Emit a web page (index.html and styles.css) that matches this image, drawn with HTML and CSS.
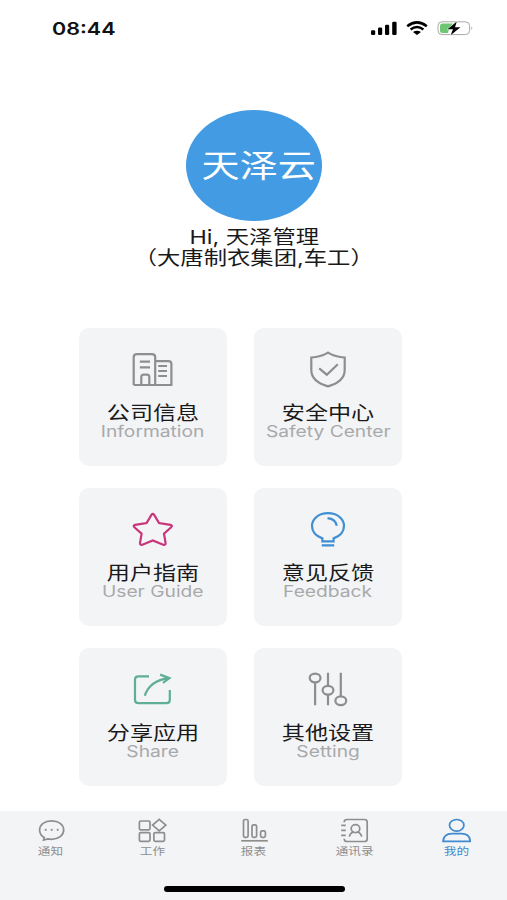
FILE: index.html
```html
<!DOCTYPE html>
<html lang="zh-CN">
<head>
    <meta charset="UTF-8">
    <meta name="viewport" content="width=device-width, initial-scale=1.0">
    <title>我的</title>
    <link rel="stylesheet" href="styles.css">
</head>
<body>
    <div class="status-bar">
        <span class="time">08:44</span>
        <svg class="status-icons" width="104" height="18" viewBox="370 19 104 18">
            <rect x="371" y="30.2" width="4.2" height="4.8" rx="1.2"/>
            <rect x="378" y="27.6" width="4.2" height="7.4" rx="1.2"/>
            <rect x="385" y="24.8" width="4.2" height="10.2" rx="1.2"/>
            <rect x="392.2" y="21.8" width="4.4" height="13.2" rx="1.2"/>
            <path d="M407.2 26.2Q417 18.6 426.8 26.2M410.6 29.4Q417 24.6 423.4 29.4" fill="none" stroke="#000" stroke-width="2.5"/>
            <path d="M413 32Q417 29.4 421 32L417 35z"/>
            <rect x="438" y="21.8" width="31.6" height="12.8" rx="4" fill="#fff" stroke="#a9a9a9"/>
            <path d="M442.5 23.6H453L449 29L448 33H442.5Q440 33 440 30.5V26Q440 23.6 442.5 23.6z" fill="#6cc673"/>
            <path d="M471.3 26.5Q473.3 28.2 471.3 30z" fill="#a9a9a9"/>
            <path d="M456.8 21.6L447.5 29.2H453L450.6 35.2L460.5 27.2H455z" stroke="#fff" stroke-width="1" paint-order="stroke"/>
        </svg>
    </div>

    <div class="profile">
        <div class="avatar"><span>天泽云</span></div>
        <p class="name">Hi, 天泽管理</p>
        <p class="name">（大唐制衣集团,车工）</p>
    </div>

    <div class="menu">
        <div class="card">
            <svg class="card-icon" viewBox="0 0 44 40">
                <path d="M2.7 35V7Q2.7 4.2 6 4.2H20.8Q24.2 4.2 24.2 7V35M24.2 11.2H37.5Q40.4 11.2 40.4 14V35H2.7M8.8 11.6H19M8.8 17.4H19M10.3 35V27Q10.3 24.6 12.8 24.6H16Q18.3 24.6 18.3 27V35M27.2 16H36M27.2 21H36M27.2 26H36"/>
            </svg>
            <span class="title">公司信息</span>
            <span class="sub">Information</span>
        </div>
        <div class="card">
            <svg class="card-icon" viewBox="0 0 44 40">
                <path d="M22 2.6Q29.5 7 38.7 7.5V20Q38.7 31.5 22 36.4Q5.3 31.5 5.3 20V7.5Q14.5 7 22 2.6z"/>
                <path d="M13.2 18.4L20.8 24.7L31.8 14.2"/>
            </svg>
            <span class="title">安全中心</span>
            <span class="sub">Safety Center</span>
        </div>
        <div class="card">
            <svg class="card-icon pink" viewBox="0 0 44 40">
                <path d="M20.4 4.9Q21.8 3 23.2 4.9L28 13L39.5 14.9Q41.9 15.7 40.2 17.2L33 23.6L34.6 33Q34.7 35.4 32.2 34.7L21.8 30.5L11.4 34.7Q8.9 35.4 9 33L10.6 23.6L3.4 17.2Q1.7 15.7 4.1 14.9L15.6 13z"/>
            </svg>
            <span class="title">用户指南</span>
            <span class="sub">User Guide</span>
        </div>
        <div class="card">
            <svg class="card-icon blue" viewBox="0 0 44 40">
                <path d="M16.4 31.4V28.4Q6 24.8 6 15.8C6 8.5 13 3.2 22 3.2S38 8.5 38 15.8Q38 24.8 27.6 28.4V31.4z"/>
                <path d="M15.8 35.4H28.2M21.5 8.2Q29.5 9 30.8 15.8"/>
            </svg>
            <span class="title">意见反馈</span>
            <span class="sub">Feedback</span>
        </div>
        <div class="card">
            <svg class="card-icon green" viewBox="0 0 44 40">
                <path d="M18 6.3H7.5Q4 6.3 4 9.5V30Q4 33.2 7.5 33.2H35.5Q38.8 33.2 38.8 30V20"/>
                <path d="M13.8 25.8Q18.5 10.5 38 8.1M29.2 4.6L38.4 8.1L32 12.8"/>
            </svg>
            <span class="title">分享应用</span>
            <span class="sub">Share</span>
        </div>
        <div class="card">
            <svg class="card-icon" viewBox="0 0 44 40">
                <path d="M9.1 12.5V35.3M22 2.7V16M22 24.6V35.3M34.8 2.7V26.3"/>
                <ellipse cx="9.1" cy="8" rx="5.4" ry="4.4"/>
                <ellipse cx="22" cy="20.3" rx="5.4" ry="4.4"/>
                <ellipse cx="34.8" cy="30.8" rx="5.4" ry="4.4"/>
            </svg>
            <span class="title">其他设置</span>
            <span class="sub">Setting</span>
        </div>
    </div>

    <div class="tab-bar">
        <div class="tab">
            <svg class="tab-icon" viewBox="0 0 30 26">
                <path d="M8.2 20.6L7.6 23L11.8 21.9Q13.6 22.3 15.6 22.3C22.5 22.3 27.7 18.3 27.7 13S22.5 3.8 15.6 3.8S3.6 7.7 3.6 13Q3.6 17.8 8.2 20.6z"/>
                <path class="dots" d="M9.7 12.8h0M15.7 12.8h0M21.7 12.8h0"/>
            </svg>
            <span>通知</span>
        </div>
        <div class="tab">
            <svg class="tab-icon" viewBox="0 0 30 26">
                <rect x="2.4" y="4" width="10.6" height="8.8" rx="1.2"/>
                <rect x="2.4" y="15.7" width="10.6" height="8.6" rx="1.2"/>
                <rect x="16.9" y="15.7" width="10.6" height="8.6" rx="1.2"/>
                <path d="M22.2 2.4L28.8 8.1L22.2 13.8L15.6 8.1z"/>
            </svg>
            <span>工作</span>
        </div>
        <div class="tab">
            <svg class="tab-icon" viewBox="0 0 30 26">
                <rect x="4.5" y="2.5" width="4.6" height="17.8" rx="1.6"/>
                <rect x="13" y="7.9" width="4.6" height="12.4" rx="1.6"/>
                <rect x="21.6" y="13.9" width="4.8" height="6.4" rx="1.6"/>
                <path d="M2.2 23.8H28.8"/>
            </svg>
            <span>报表</span>
        </div>
        <div class="tab">
            <svg class="tab-icon" viewBox="0 0 30 26">
                <path d="M4.2 5.2Q4.2 2.5 7 2.5H24.5Q27.2 2.5 27.2 5V22Q27.2 24.5 24.5 24.5H7Q4.2 24.5 4.2 21.8M1.2 8.4H5.8M1.2 13.4H5.8M1.2 18.3H5.8"/>
                <ellipse cx="15.5" cy="11.6" rx="4.3" ry="4"/>
                <path d="M9.3 19.6Q10 16 13.3 15M17.7 15Q21 16 21.7 19.6"/>
            </svg>
            <span>通讯录</span>
        </div>
        <div class="tab active">
            <svg class="tab-icon" viewBox="0 0 30 26">
                <ellipse cx="15.7" cy="8.3" rx="7.2" ry="5.8"/>
                <path d="M2.1 24.4Q2.6 16.6 11 16.6H20.4Q28.8 16.6 29.3 24.4z"/>
            </svg>
            <span>我的</span>
        </div>
        <div class="home-indicator"></div>
    </div>
</body>
</html>
```
FILE: styles.css
```css
body {
    display: flex;
    flex-direction: column;
    width: 507px;
    height: 900px;
    margin: 0;
    background-color: #fff;
    font-family: Inter, "Noto Sans CJK SC", sans-serif;
    color: #1a1a1a;
    overflow: hidden;
}
.status-bar {
    display: flex;
    justify-content: space-between;
    align-items: center;
    height: 56px;
    box-sizing: border-box;
    padding: 0 33px 0 52px;
}
.time {
    padding-top: 2px;
    font-size: 17.7px;
    font-weight: 600;
    line-height: 20px;
    color: #111;
    transform: scaleX(1.216);
    transform-origin: left;
}
.profile {
    display: flex;
    flex-direction: column;
    align-items: center;
    padding: 54px 0 0 1px;
}
.avatar {
    display: flex;
    justify-content: center;
    align-items: center;
    width: 136px;
    height: 111px;
    margin-bottom: 6px;
    border-radius: 50%;
    background-color: #439be3;
    color: #fff;
}
.avatar span {
    font-size: 31.3px;
    font-weight: 400;
    line-height: 40px;
    padding-left: 7px;
    white-space: nowrap;
    transform: scaleX(1.216);
}
.name {
    margin: 0;
    font-size: 19.2px;
    line-height: 21px;
    white-space: nowrap;
    transform: scaleX(1.216);
}
.menu {
    display: grid;
    grid-template-columns: 148px 148px;
    grid-auto-rows: 138px;
    gap: 22px 27px;
    margin: 59px 0 0 79px;
}
.card {
    display: flex;
    flex-direction: column;
    align-items: center;
    box-sizing: border-box;
    padding-top: 22px;
    border-radius: 10px;
    background-color: #f3f4f6;
}
.card-icon {
    width: 44px;
    height: 40px;
    margin-bottom: 13px;
    fill: none;
    stroke: #8e8e8e;
    stroke-width: 2.2;
}
.pink {
    stroke: #c9357b;
}
.blue {
    stroke: #3f8fd2;
}
.green {
    stroke: #5fae95;
}
.title {
    font-size: 19px;
    line-height: 21px;
    white-space: nowrap;
    transform: scaleX(1.216);
}
.sub {
    font-size: 15.8px;
    line-height: 16px;
    color: #a8a9ab;
    white-space: nowrap;
    transform: scaleX(1.216);
}
.tab-bar {
    position: relative;
    display: flex;
    box-sizing: border-box;
    height: 89px;
    margin-top: auto;
    padding-top: 6px;
    background-color: #f3f4f6;
}
.tab {
    display: flex;
    flex: 1;
    flex-direction: column;
    align-items: center;
    color: #8e8e8e;
}
.tab.active {
    color: #3f8ad0;
}
.tab-icon {
    width: 30px;
    height: 26px;
    fill: none;
    stroke: currentColor;
    stroke-width: 1.7;
}
.dots {
    stroke-width: 2.2;
    stroke-linecap: round;
}
.tab span {
    font-size: 10.4px;
    line-height: 18px;
    transform: scaleX(1.216);
}
.home-indicator {
    position: absolute;
    left: 164px;
    bottom: 8px;
    width: 181px;
    height: 6px;
    border-radius: 3px;
    background-color: #000;
}
```
